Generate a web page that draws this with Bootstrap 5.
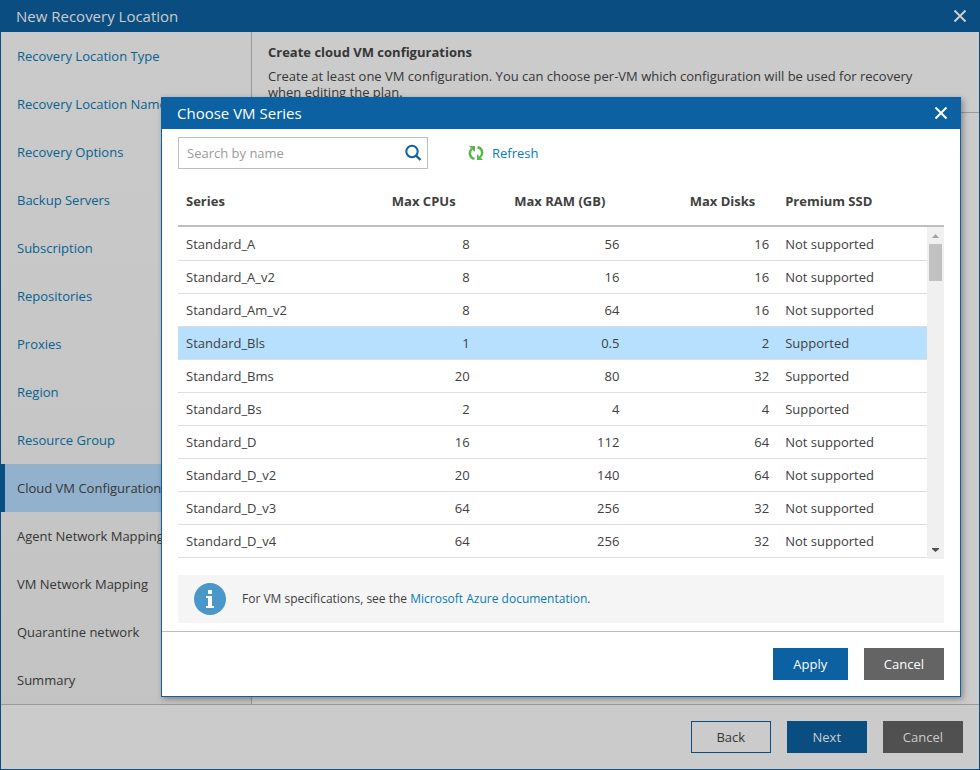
<!DOCTYPE html>
<html lang="en">
<head>
<meta charset="utf-8">
<meta name="viewport" content="width=device-width, initial-scale=1">
<title>New Recovery Location</title>
<link href="https://cdn.jsdelivr.net/npm/bootstrap@5.3.0/dist/css/bootstrap.min.css" rel="stylesheet">
<style>
  body { font: 13px/16px "Open Sans", sans-serif; color: #404040; }
  a { color: #0a7cb5; text-decoration: none; }
  button { font-size: 13px; }

  .wizard { min-height: 100vh; background: #cbcbcb; border: 1px solid #0a4e81; border-top: 0; color: #363636; }
  .titlebar { height: 32px; padding: 0 12px 0 15px; font-size: 15px; line-height: 32px; }
  .wizard > .titlebar { background: #0a4e81; color: #cccccc; }
  .close-btn { border: 0; background: none; padding: 0; color: inherit; display: flex; }

  .steps { width: 251px; border-right: 1px solid #999; background: linear-gradient(#cacaca, #c3c3c3); }
  .steps a { display: block; height: 48px; line-height: 48px; padding: 0 16px; color: #06638f; white-space: nowrap; }
  .steps a.todo { color: #363636; }
  .steps a.current { color: #363636; background: #92b1cc; border-left: 4px solid #0a4e81; padding-left: 12px; }

  .intro { height: 81px; padding: 12px 48px 0 16px; border-bottom: 1px solid #999; overflow: hidden; }
  .intro h1 { font-size: 13px; line-height: 16px; font-weight: 700; margin: 0 0 8px; }
  .wizard-foot { border-top: 1px solid #999; padding: 16px; }

  .act { min-width: 80px; height: 32px; padding: 0 19px; border: 1px solid transparent; border-radius: 0; color: #fff; font-size: 13px; line-height: 30px; }
  .wizard-foot .act { color: #cccccc; }
  .wizard-foot .back { color: #363636; border-color: #0a4e81; }
  .wizard-foot .next { background: #0a4e81; }
  .wizard-foot .cancel { background: #505050; }
  .apply { background: #0c61a3; min-width: 75px; }
  .dialog .cancel { background: #646464; }

  .overlay { position: absolute; inset: 0; padding: 97px 19px 0 161px; }
  .dialog { background: #fff; border: 1px solid #0c61a3; border-top: 0; box-shadow: 2px 2px 6px rgba(0,0,0,.35); }
  .dialog > .titlebar { background: #0c61a3; color: #fff; }
  .dialog-main { padding: 8px 16px; }

  .search-box { width: 250px; height: 32px; border: 1px solid #bfbfbf; padding: 0 5px 0 8px; }
  .search-box input { border: 0; outline: 0; padding: 0; width: 100%; min-width: 0; font-size: 13px; color: #404040; }
  .search-box input::placeholder { color: #9b9b9b; }
  .plain { border: 0; background: none; padding: 0; display: flex; align-items: center; }
  .refresh { color: #0a7cb5; gap: 8px; margin-left: 40px; }

  .series-list { padding-bottom: 1px; }
  .series-table { table-layout: fixed; border-collapse: separate; border-spacing: 0; color: #404040; }
  .series-table th { height: 50px; padding: 0 22px 0 8px; border-bottom: 2px solid #bfbfbf; font-weight: 700; vertical-align: middle; white-space: nowrap; }
  .series-table td { height: 33px; padding: 0 8px; border-bottom: 1px solid #dedede; vertical-align: middle; }
  .series-table tr:first-child td { height: 34px; }
  .series-table .picked td { background: #b7e0ff; }
  .col-data { width: 20%; }
  .rail { width: 17px; }
  .rail-head { height: 50px; border-bottom: 2px solid #bfbfbf; }
  .rail-track { background: #f0f0f0; padding: 0 2px; }
  .rail-thumb { height: 37px; background: #c1c1c1; }
  .rail svg { display: block; }

  .note { background: #f5f5f5; height: 48px; padding: 0 16px; margin-top: 16px; font-size: 12px; }
  .dialog-foot { border-top: 1px solid #bfbfbf; padding: 16px; }
</style>
<script src="https://cdn.jsdelivr.net/npm/bootstrap@5.3.0/dist/js/bootstrap.bundle.min.js"></script>
</head>
<body>
<div class="wizard d-flex flex-column">
  <header class="titlebar d-flex align-items-center justify-content-between">
    <span>New Recovery Location</span>
    <button class="close-btn" type="button" aria-label="Close wizard">
      <svg width="14" height="14" viewBox="0 0 14 14" stroke="currentColor" stroke-width="2" fill="none"><path d="M1.500 1.500l11 11M12.500 1.500l-11 11"/></svg>
    </button>
  </header>
  <div class="d-flex flex-grow-1">
    <nav class="steps flex-shrink-0" aria-label="Wizard steps">
      <a href="#">Recovery Location Type</a>
      <a href="#">Recovery Location Name</a>
      <a href="#">Recovery Options</a>
      <a href="#">Backup Servers</a>
      <a href="#">Subscription</a>
      <a href="#">Repositories</a>
      <a href="#">Proxies</a>
      <a href="#">Region</a>
      <a href="#">Resource Group</a>
      <a href="#" class="current" aria-current="step">Cloud VM Configuration</a>
      <a href="#" class="todo">Agent Network Mapping</a>
      <a href="#" class="todo">VM Network Mapping</a>
      <a href="#" class="todo">Quarantine network</a>
      <a href="#" class="todo">Summary</a>
    </nav>
    <main class="flex-grow-1">
      <div class="intro">
        <h1>Create cloud VM configurations</h1>
        <p class="m-0">Create at least one VM configuration. You can choose per-VM which configuration will be used for recovery when editing the plan.</p>
      </div>
    </main>
  </div>
  <footer class="wizard-foot d-flex justify-content-end gap-3">
    <button type="button" class="btn act back">Back</button>
    <button type="button" class="btn act next">Next</button>
    <button type="button" class="btn act cancel">Cancel</button>
  </footer>
</div>

<div class="overlay">
  <section class="dialog" role="dialog" aria-labelledby="dialog-title">
    <header class="titlebar d-flex align-items-center justify-content-between">
      <span id="dialog-title">Choose VM Series</span>
      <button class="close-btn" type="button" aria-label="Close dialog">
        <svg width="14" height="14" viewBox="0 0 14 14" stroke="currentColor" stroke-width="2" fill="none"><path d="M1.500 1.500l11 11M12.500 1.500l-11 11"/></svg>
      </button>
    </header>
    <div class="dialog-main">
      <div class="d-flex align-items-center mb-2">
        <div class="search-box d-flex align-items-center">
          <input type="text" placeholder="Search by name" aria-label="Search by name">
          <button type="button" class="plain" aria-label="Search">
            <svg width="18" height="18" viewBox="0 0 18 18" fill="none" stroke="#0c61a3"><circle cx="8" cy="7.5" r="5.7" stroke-width="2"/><path d="M12 11.5l4.500 4.500" stroke-width="2.4"/></svg>
          </button>
        </div>
        <button type="button" class="plain refresh">
          <svg width="16" height="16" viewBox="0 0 16 16" fill="none" stroke="#54b848" stroke-width="2.400"><path d="M6.500 13.800C1.600 13 .4 7.500 3.800 3.800"/><path d="M1 1H7v6z" fill="#54b848" stroke="none"/><path d="M9.500 2.200C14.400 3 15.600 8.500 12.200 12.200"/><path d="M15 15H9V9z" fill="#54b848" stroke="none"/></svg>
          <span>Refresh</span>
        </button>
      </div>
      <div class="d-flex">
        <div class="series-list flex-grow-1">
        <table class="series-table w-100">
          <colgroup><col><col class="col-data"><col class="col-data"><col class="col-data"><col class="col-data"></colgroup>
          <thead>
            <tr><th>Series</th><th class="text-end">Max CPUs</th><th class="text-end">Max RAM (GB)</th><th class="text-end">Max Disks</th><th>Premium SSD</th></tr>
          </thead>
          <tbody>
            <tr><td>Standard_A</td><td class="text-end">8</td><td class="text-end">56</td><td class="text-end">16</td><td>Not supported</td></tr>
            <tr><td>Standard_A_v2</td><td class="text-end">8</td><td class="text-end">16</td><td class="text-end">16</td><td>Not supported</td></tr>
            <tr><td>Standard_Am_v2</td><td class="text-end">8</td><td class="text-end">64</td><td class="text-end">16</td><td>Not supported</td></tr>
            <tr class="picked"><td>Standard_Bls</td><td class="text-end">1</td><td class="text-end">0.5</td><td class="text-end">2</td><td>Supported</td></tr>
            <tr><td>Standard_Bms</td><td class="text-end">20</td><td class="text-end">80</td><td class="text-end">32</td><td>Supported</td></tr>
            <tr><td>Standard_Bs</td><td class="text-end">2</td><td class="text-end">4</td><td class="text-end">4</td><td>Supported</td></tr>
            <tr><td>Standard_D</td><td class="text-end">16</td><td class="text-end">112</td><td class="text-end">64</td><td>Not supported</td></tr>
            <tr><td>Standard_D_v2</td><td class="text-end">20</td><td class="text-end">140</td><td class="text-end">64</td><td>Not supported</td></tr>
            <tr><td>Standard_D_v3</td><td class="text-end">64</td><td class="text-end">256</td><td class="text-end">32</td><td>Not supported</td></tr>
            <tr><td>Standard_D_v4</td><td class="text-end">64</td><td class="text-end">256</td><td class="text-end">32</td><td>Not supported</td></tr>
          </tbody>
        </table>
        </div>
        <div class="rail d-flex flex-column" aria-hidden="true">
          <div class="rail-head"></div>
          <div class="rail-track d-flex flex-column flex-grow-1">
            <svg width="13" height="17" viewBox="0 0 13 17"><path d="M3 11h7L6.500 7z" fill="#a3a3a3"/></svg>
            <div class="rail-thumb"></div>
            <svg class="mt-auto" width="13" height="17" viewBox="0 0 13 17"><path d="M3 6h7v1L6.500 10 3 7z" fill="#505050"/></svg>
          </div>
        </div>
      </div>
      <div class="note d-flex align-items-center gap-3">
        <svg class="flex-shrink-0" width="32" height="32" viewBox="0 0 32 32"><circle cx="16" cy="16" r="16" fill="#4a97c9"/><path d="M14 7h4v4h-4zM12 13h6v10h2v2h-8v-2h2v-8h-2z" fill="#fff"/></svg>
        <span>For VM specifications, see the <a href="#">Microsoft Azure documentation</a>.</span>
      </div>
    </div>
    <footer class="dialog-foot d-flex justify-content-end gap-3">
      <button type="button" class="btn act apply">Apply</button>
      <button type="button" class="btn act cancel">Cancel</button>
    </footer>
  </section>
</div>
</body>
</html>
